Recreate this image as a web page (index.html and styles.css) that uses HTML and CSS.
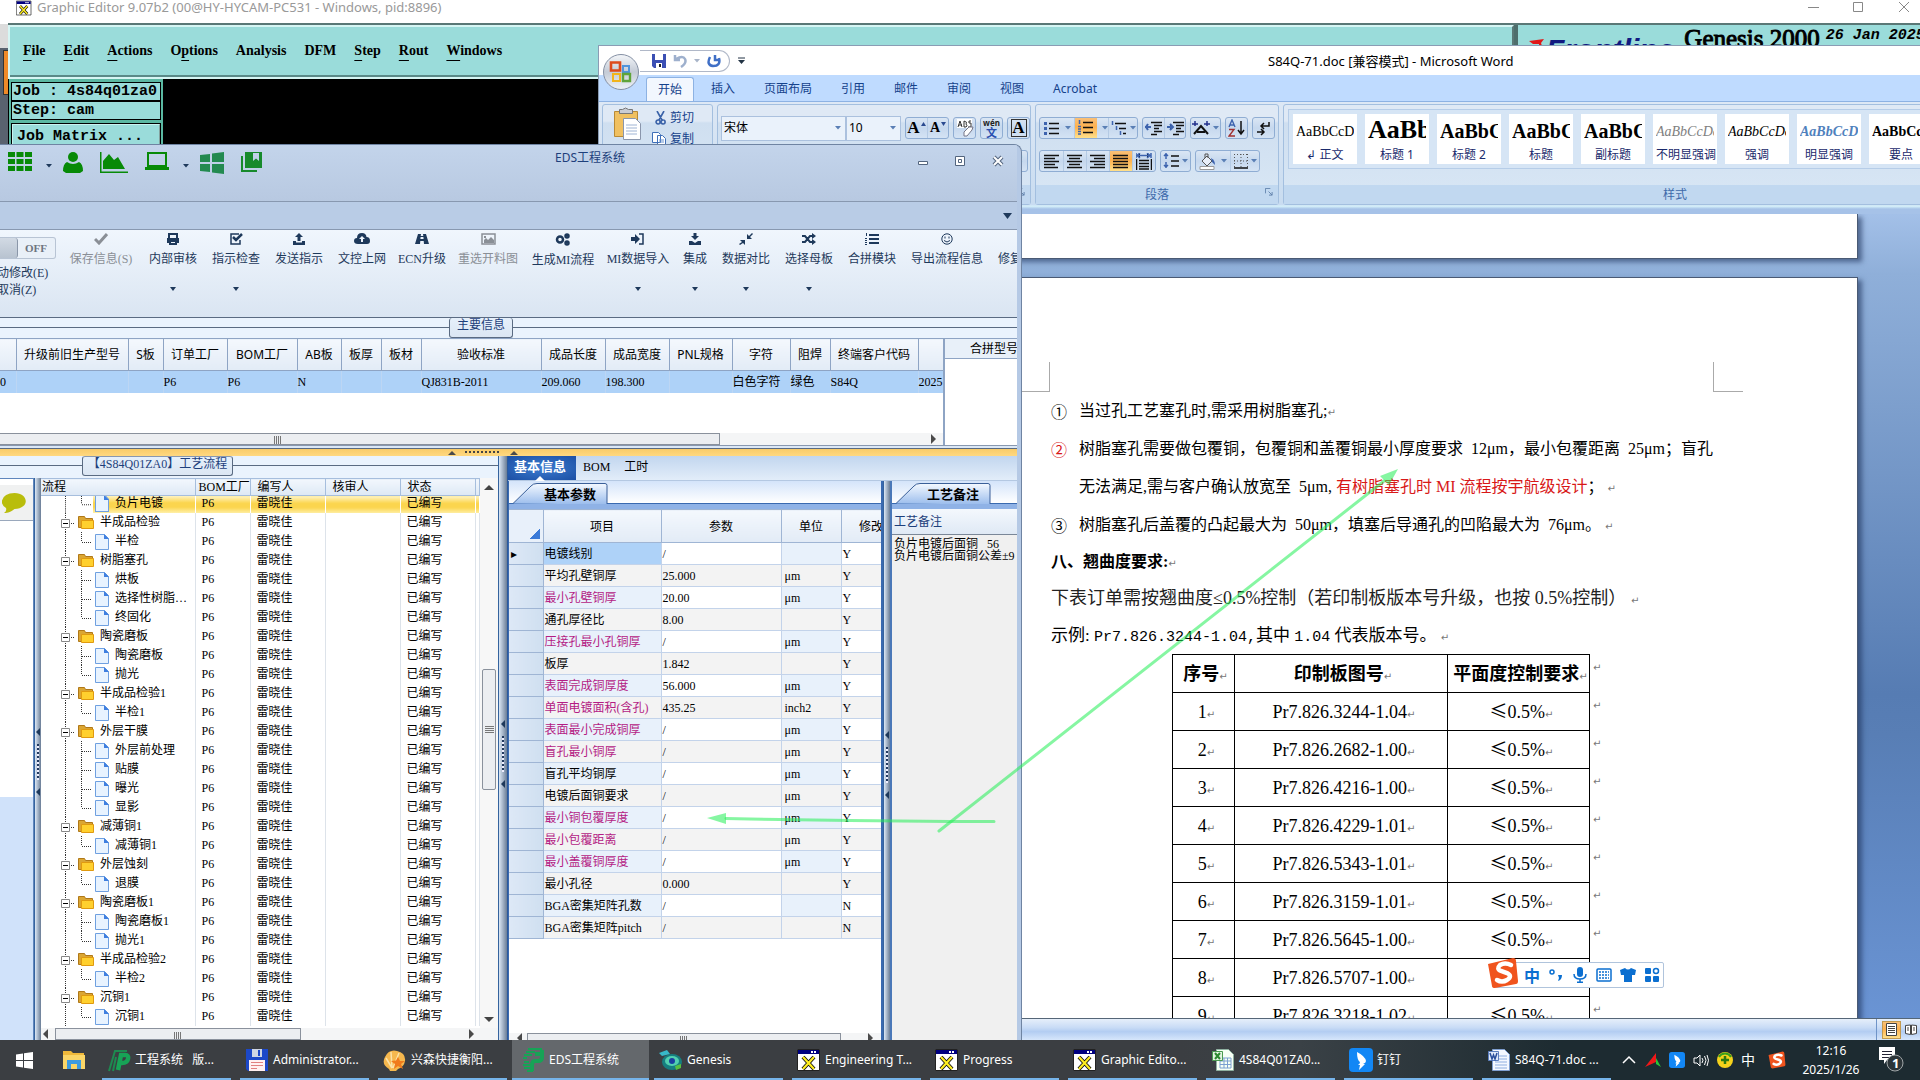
FILE: index.html
```html
<!DOCTYPE html>
<html lang="zh-CN">
<head>
<meta charset="utf-8">
<title>EDS工程系统</title>
<link rel="stylesheet" href="styles.css">
</head>
<body>
<svg class="defs" aria-hidden="true">
  <defs>
    <linearGradient id="orb" x1="0" y1="0" x2="0" y2="1"><stop offset="0" stop-color="#f4f6f9"/><stop offset=".5" stop-color="#c4cbd6"/><stop offset="1" stop-color="#eef2f8"/></linearGradient>
  </defs>
  <symbol id="x-app" viewBox="0 0 24 24"><path fill="#fff" stroke="#222" d="M.5 1.500h22v21H.5z"/><path fill="#000080" d="M1 2h21v4H1z"/><path fill="#fff" d="M14 3h2v2h-2zM17 3h2v2h-2z"/><path stroke="#111" stroke-width="4" d="m6 9 11 12M17 9 6 21"/><path stroke="#ffee20" stroke-width="2.200" d="m6 9 11 12M17 9 6 21"/></symbol>
  <symbol id="p-logo" viewBox="0 0 24 24"><path fill="none" stroke="#17a356" stroke-width="2" d="M7 1h14M5 4h9M3 7h8M6 10H2M8 14H3M10 17H2M10 20H3M6 23h6"/><path fill="none" stroke="#17a356" stroke-width="4" d="M21 2v7q0 4-4 4h-3q-3 0-3 4v6M14 6h6"/></symbol>
  <symbol id="p-app" viewBox="0 0 24 24"><path fill="none" stroke="#1d8a50" stroke-width="2" d="M2 23 8 3h12M6 23 9 9"/><path fill="none" stroke="#17a356" stroke-width="4.500" d="M11 22 14 7h4q4 0 3 4t-6 4h-3"/></symbol>
  <symbol id="word-doc" viewBox="0 0 24 24"><path fill="#f4f8ff" stroke="#7f9fd0" d="M5.500 1.500h12l5 5v16h-17z"/><path stroke="#8eaee0" d="M8 11h12M8 14h12M8 17h12M8 20h12M12 8h8"/><path fill="#dfe9fa" stroke="#5c7fc0" d="M1.500 3.500h10v9h-10z"/><path fill="none" stroke="#2a4f9c" stroke-width="1.500" d="m3 5 2 6 1.500-4L8 11l2-6"/></symbol>
  <symbol id="excel-doc" viewBox="0 0 24 24"><path fill="#f6fff4" stroke="#8fb0a0" d="M5.500 1.500h12l5 5v16h-17z"/><path fill="none" stroke="#7a9fd0" d="M9 10h11v10H9zM9 13h11M9 16.500h11M13 10v10M16.500 10v10"/><path fill="#e2f4e0" stroke="#4a9a50" d="M1.500 3.500h10v9h-10z"/><path fill="none" stroke="#2c8a30" stroke-width="2" d="m4 5 5 6M9 5l-5 6"/></symbol>
  <symbol id="wing" viewBox="0 0 24 24"><rect width="24" height="24" rx="4" fill="#1287f5"/><path fill="#fff" d="M8 4q8 4 9 9 0 2-3 3h2l-6 6 1-5H9q2-1 2-3-3-2-3-10z"/></symbol>
  <symbol id="sogou" viewBox="0 0 32 32"><path fill="#f0541e" d="m1 7 25-6q3 0 3 3l2 20q0 3-2 3L8 31q-3 0-3-2z"/><path fill="none" stroke="#fff" stroke-width="4.500" stroke-linecap="round" d="M24 8q-6-3-11 0-4 4 1 6l6 2q6 3 0 7-5 3-10 0"/></symbol>
  <symbol id="caret" viewBox="0 0 6 4"><path d="M0 0h6L3 3.500z"/></symbol>
</svg>

<section class="genesis">
  <div class="behind"><i></i></div>
  <div class="gwin">
    <header class="gtitle">
      <svg class="i16"><use href="#x-app"/></svg>
      <span>Graphic Editor 9.07b2 (00@HY-HYCAM-PC531 - Windows, pid:8896)</span>
      <svg class="gctl" viewBox="0 0 102 14"><path fill="none" stroke="#888" d="M0 7.500h11M45.500 2.500h9v9h-9zM91 2l10 10M101 2 91 12"/></svg>
    </header>
    <div class="gbar">
      <nav class="gmenu"><a href="#"><u>F</u>ile</a><a href="#"><u>E</u>dit</a><a href="#"><u>A</u>ctions</a><a href="#">O<u>p</u>tions</a><a href="#">Analysis</a><a href="#">DFM</a><a href="#"><u>S</u>tep</a><a href="#"><u>R</u>out</a><a href="#"><u>W</u>indows</a></nav>
      <div class="gbrand"><svg width="18" height="14"><path fill="#e01818" d="M1 3 16 1l-3 4 2 6-4 3V6H5z"/></svg><b>Frontline</b><span>Genesis 2000</span><em>26 Jan 2025</em></div>
    </div>
    <div class="gcanvas">
      <div class="gjob"><div>Job : 4s84q01za0</div><div>Step: cam</div><button>Job Matrix ...</button></div>
    </div>
  </div>
</section>

<section class="word">
  <header class="wtitle">
    <svg class="orb" viewBox="0 0 38 38"><circle cx="19" cy="19" r="17.500" fill="url(#orb)" stroke="#8590a4"/><g fill="none" stroke-width="2.600"><path stroke="#dd4a1c" d="M9 9.500h9v8H9z"/><path stroke="#4f94dc" stroke-width="2" d="M21 13h6v6h-6z"/><path stroke="#f2b41c" stroke-width="2" d="M11 21h7v7h-7z"/><path stroke="#5fa43a" stroke-width="2.400" d="M21 21h7v7h-7z"/></g></svg>
    <div class="qat">
      <svg width="14" height="14"><path fill="#3b4fb4" d="M0 0h14v14H2l-2-2z"/><path fill="#fff" d="M3 0h8v6H3zM4 9h6v5H4z"/><path fill="#222" d="M7 10h2v3H7z"/></svg>
      <svg width="14" height="14"><path fill="none" stroke="#9eb0cd" stroke-width="2.500" d="M2 1v5h5M3 5q7-4 9 0t-4 8"/></svg>
      <svg class="dn pale"><use href="#caret"/></svg>
      <svg width="14" height="14"><path fill="none" stroke="#3f6fc6" stroke-width="2.500" d="M3 3q-4 8 3 9 8 0 6-8M8 1v5h5"/></svg>
    </div>
    <svg width="8" height="8"><path stroke="#234" d="M0 1h7"/><path fill="#234" d="M0 3h7L3.500 7z"/></svg>
    <h1>S84Q-71.doc [兼容模式] - Microsoft Word</h1>
  </header>
  <nav class="wtabs"><a class="on" href="#">开始</a><a href="#">插入</a><a href="#">页面布局</a><a href="#">引用</a><a href="#">邮件</a><a href="#">审阅</a><a href="#">视图</a><a href="#">Acrobat</a></nav>
  <div class="ribbon">
    <div class="grp clip">
      <svg width="30" height="34"><path fill="#f0c060" stroke="#b98a35" d="M1.500 4.500h23v25h-23z"/><path fill="#c9ccd4" stroke="#777" d="M6.500 6.500v-4h3q3-3 6 0h4v4z"/><path fill="#fff" stroke="#8a96ac" d="M10.500 11.500h12l5 5v16h-17z"/><path stroke="#9fb4d4" d="M13 18h11M13 21h11M13 24h11M13 27h11"/></svg>
      <div>
        <button><svg width="11" height="14"><path fill="none" stroke="#3a62a8" stroke-width="1.600" d="M2 0l5 9M9 0 4 9M3 9a2 2 0 1 0 .1 4 2 2 0 0 0 0-4M8 9a2 2 0 1 0 .1 4 2 2 0 0 0 0-4"/></svg>剪切</button>
        <button><svg width="14" height="14"><path fill="#fff" stroke="#3f6fb8" d="M.5.500h6l2 2v8h-8zM5.500 3.500h5l3 3v7h-8z"/><path stroke="#6a94d0" d="M7 8h5M7 10h5"/></svg>复制</button>
      </div>
    </div>
    <div class="grp font">
      <div class="row"><label class="combo wide"><input value="宋体" aria-label="字体"><svg class="dn"><use href="#caret"/></svg></label><label class="combo"><input value="10" aria-label="字号"><svg class="dn"><use href="#caret"/></svg></label>
        <span class="bt ser"><button>A<svg width="5" height="12"><path fill="#2a4a90" d="M0 4 2.500 0 5 4z"/></svg></button><button class="sm">A<svg width="5" height="12"><path fill="#2a4a90" d="M0 0h5L2.500 4z"/></svg></button></span>
        <span class="bt"><button aria-label="清除格式"><svg width="18" height="18"><path fill="#fff" d="M1 0h15v9H1z"/><path fill="none" stroke="#333" d="m2 8 2-6 2 6M3 6h3M8 2v6h2q2-1 0-3 2-2-2-3M15 2h-2v2h2v4h-3"/><path fill="#fff" stroke="#778" d="m8 13 5-5h4l-1 3-5 6H8z"/></svg></button></span>
        <span class="bt wen"><button><small>wén</small>文</button></span>
        <span class="bt ser"><button class="boxed"><b>A</b></button></span></div>
      <div class="row"><span class="bt circ"><button>字</button></span></div>
      <footer><svg class="lau" viewBox="0 0 9 9"><path fill="none" stroke="#5d7ea8" d="M.5 6V.500H6M4 4l4 4M8 4.500V8H4.500"/></svg></footer>
    </div>
    <div class="grp para">
      <div class="row">
        <span class="bt"><button class="w34"><svg width="16" height="15"><path fill="#3d63ae" d="M0 1h3v3H0zM0 6h3v3H0zM0 11h3v3H0z"/><path stroke="#111" stroke-width="1.500" d="M5 2.500h10M5 7.500h10M5 12.500h10"/></svg><svg class="dn"><use href="#caret"/></svg></button><button class="w34"><svg class="lit" width="22" height="20" viewBox="-3 -2 22 20"><path stroke="#3d63ae" stroke-width="1.500" d="M1.500 0v4M0 6.500h3M0 9h3M0 11.500h3M0 14h3"/><path stroke="#111" stroke-width="1.500" d="M5 2.500h10M5 7.500h10M5 12.500h10"/></svg><svg class="dn"><use href="#caret"/></svg></button><button class="w30"><svg width="16" height="15"><path stroke="#3d63ae" stroke-width="1.500" d="M1.500 0v4M5.500 5v4M9.500 10v4"/><path stroke="#111" stroke-width="1.500" d="M4 2.500h11M8 7.500h7M12 12.500h3"/></svg><svg class="dn"><use href="#caret"/></svg></button></span>
        <span class="bt"><button><svg width="17" height="15"><path stroke="#111" stroke-width="1.500" d="M6 1.500h11M9 4.500h8M9 7.500h5M9 10.500h8M6 13.500h6"/><path stroke="#3d63ae" stroke-width="2" d="M0 6h6M3 3 1 6l2 3"/></svg></button><button><svg width="17" height="15"><path stroke="#111" stroke-width="1.500" d="M6 1.500h11M9 4.500h8M9 7.500h5M9 10.500h8M6 13.500h6"/><path stroke="#3d63ae" stroke-width="2" d="M0 6h6M3 3l3 3-3 3"/></svg></button></span>
        <span class="bt"><button class="w30"><svg width="18" height="15"><path fill="none" stroke="#111" stroke-width="2" d="m2 13 7-8 7 8M5 11h8"/><path stroke="#22308c" stroke-width="1.500" d="M0 3h6M12 3h6M3 0v5M15 0v5"/></svg><svg class="dn"><use href="#caret"/></svg></button></span>
        <span class="bt"><button><svg width="18" height="18"><path fill="none" stroke="#3d63ae" stroke-width="1.400" d="m1 8 3-7 3 7M2 6h4"/><path fill="none" stroke="#a03030" stroke-width="1.400" d="M1 10.500h5L1 17h6"/><path fill="none" stroke="#111" stroke-width="1.500" d="M13 2v13m-3-4 3 4 3-4"/></svg></button></span>
        <span class="bt"><button><svg width="14" height="15"><path fill="none" stroke="#111" stroke-width="1.500" d="M12 1v4H5m2-3L4 5l3 3M0 11h7M4 8l3 3-3 3"/></svg></button></span>
      </div>
      <div class="row">
        <span class="bt al"><button><svg width="16" height="15"><path stroke="#111" stroke-width="1.500" d="M0 1.500h15M0 4.500h11M0 7.500h15M0 10.500h11M0 13.500h14"/></svg></button><button><svg width="16" height="15"><path stroke="#111" stroke-width="1.500" d="M0 1.500h15M2 4.500h11M0 7.500h15M2 10.500h11M0 13.500h15"/></svg></button><button><svg width="16" height="15"><path stroke="#111" stroke-width="1.500" d="M0 1.500h15M4 4.500h11M0 7.500h15M4 10.500h11M0 13.500h15"/></svg></button><button class="hot"><svg width="16" height="15"><path stroke="#111" stroke-width="1.500" d="M0 1.500h15M0 4.500h15M0 7.500h15M0 10.500h15M0 13.500h15"/></svg></button><button><svg width="16" height="17"><path stroke="#3d63ae" stroke-width="1.500" d="M0 0v5M15 0v5M1 2.500h13M4 0 1 2.500 4 5M11 0l3 2.500L11 5"/><path stroke="#111" stroke-width="1.500" d="M.500 6v11M15.500 6v11M3 7.500h10M3 10.500h10M3 13.500h10M3 16h10"/></svg></button></span>
        <span class="bt"><button class="w30"><svg width="16" height="16"><path fill="none" stroke="#3d63ae" stroke-width="1.500" d="M3 0v6M1 3l2-2 2 2M3 15V9m-2 3 2 2 2-2"/><path stroke="#111" stroke-width="1.500" d="M8 3h8M8 8h8M8 13h8"/></svg><svg class="dn"><use href="#caret"/></svg></button></span>
        <span class="bt"><button class="w34"><svg width="17" height="17"><path fill="#e8eef8" stroke="#555" d="m3 8 5-5 5 5-5 5z"/><path fill="none" stroke="#555" d="M6 5V1h3v4"/><path fill="#3d63ae" d="M12 5q4 2 4 7l-3-3z"/><path fill="#fff" stroke="#999" d="M1 13.500h14v3H1z"/></svg><svg class="dn"><use href="#caret"/></svg></button><button class="w30"><svg width="14" height="15"><path stroke="#555" stroke-dasharray="1 2" d="M.500 0v14M7 0v14M13.500 0v14M0 .500h14M0 7h14"/><path stroke="#111" stroke-width="1.500" d="M0 14h14"/></svg><svg class="dn"><use href="#caret"/></svg></button></span>
      </div>
      <footer>段落<svg class="lau" viewBox="0 0 9 9"><path fill="none" stroke="#5d7ea8" d="M.5 6V.500H6M4 4l4 4M8 4.500V8H4.500"/></svg></footer>
    </div>
    <div class="grp styles">
      <div class="gallery">
        <button><span>AaBbCcDd</span>↲ 正文</button><button class="h1"><span>AaBb</span>标题 1</button><button class="h2"><span>AaBbC</span>标题 2</button><button class="h2"><span>AaBbC</span>标题</button><button class="h2"><span>AaBbC</span>副标题</button><button class="dim"><span>AaBbCcDd</span>不明显强调</button><button class="it"><span>AaBbCcDd</span>强调</button><button class="blu"><span>AaBbCcDd</span>明显强调</button><button class="bd"><span>AaBbCcDd</span>要点</button>
      </div>
      <footer>样式</footer>
    </div>
  </div>
  <main class="desk">
    <div class="page first"></div>
    <article class="page">
      <div class="corners"><i></i><i></i></div>
      <ol>
        <li><span>①</span><p>当过孔工艺塞孔时,需采用树脂塞孔;<s>↵</s></p></li>
        <li><span class="red">②</span><p>树脂塞孔需要做包覆铜，包覆铜和盖覆铜最小厚度要求&nbsp; 12μm，最小包覆距离&nbsp; 25μm；盲孔<br>无法满足,需与客户确认放宽至&nbsp; 5μm, <em class="red">有树脂塞孔时 MI 流程按宇航级设计</em>； <s>↵</s></p></li>
        <li><span>③</span><p>树脂塞孔后盖覆的凸起最大为&nbsp; 50μm，填塞后导通孔的凹陷最大为&nbsp; 76μm。 <s>↵</s></p></li>
      </ol>
      <h2>八、翘曲度要求:<s>↵</s></h2>
      <p class="big">下表订单需按翘曲度≤0.5%控制（若印制板版本号升级，也按 0.5%控制） <s>↵</s></p>
      <p class="mid">示例: <span>Pr7.826.3244-1.04,</span>其中 <span>1.04</span> 代表版本号。 <s>↵</s></p>
      <table>
        <colgroup><col class="k1"><col class="k2"><col class="k3"><col class="k4"></colgroup>
        <tr><th>序号<s>↵</s><th>印制板图号<s>↵</s><th>平面度控制要求<s>↵</s><td><s>↵</s>
        <tr><td>1<s>↵</s><td>Pr7.826.3244-1.04<s>↵</s><td><b>≤</b>0.5%<s>↵</s><td><s>↵</s>
        <tr><td>2<s>↵</s><td>Pr7.826.2682-1.00<s>↵</s><td><b>≤</b>0.5%<s>↵</s><td><s>↵</s>
        <tr><td>3<s>↵</s><td>Pr7.826.4216-1.00<s>↵</s><td><b>≤</b>0.5%<s>↵</s><td><s>↵</s>
        <tr><td>4<s>↵</s><td>Pr7.826.4229-1.01<s>↵</s><td><b>≤</b>0.5%<s>↵</s><td><s>↵</s>
        <tr><td>5<s>↵</s><td>Pr7.826.5343-1.01<s>↵</s><td><b>≤</b>0.5%<s>↵</s><td><s>↵</s>
        <tr><td>6<s>↵</s><td>Pr7.826.3159-1.01<s>↵</s><td><b>≤</b>0.5%<s>↵</s><td><s>↵</s>
        <tr><td>7<s>↵</s><td>Pr7.826.5645-1.00<s>↵</s><td><b>≤</b>0.5%<s>↵</s><td><s>↵</s>
        <tr><td>8<s>↵</s><td>Pr7.826.5707-1.00<s>↵</s><td><td>
        <tr><td>9<s>↵</s><td>Pr7.826.3218-1.02<s>↵</s><td><b>≤</b>0.5%<s>↵</s><td><s>↵</s>
      </table>
    </article>
  </main>
  <footer class="wstatus"><div><button class="hot" aria-label="页面视图"><svg width="11" height="13"><path fill="#fff" stroke="#444" d="M.5.500h10v12H.5z"/><path stroke="#444" d="M2 3.500h7M2 5.500h7M2 7.500h7M2 9.500h7"/></svg></button><svg width="12" height="12"><path fill="#fff" stroke="#444" d="M.5 1.500 5.500 1v9.500l-5-1zM11.500 1.500 6.500 1v9.500l5-1z"/><path stroke="#444" d="M2 4h2M2 6h2M8 4h2M8 6h2"/></svg></div></footer>
</section>

<section class="eds">
  <header class="etop">
    <svg width="24" height="20" fill="#078a07"><path d="M0 0h7v5H0zM8.500 0h7v5h-7zM17 0h7v5h-7zM0 7h7v5H0zM8.500 7h7v5h-7zM17 7h7v5h-7zM0 14h7v5H0zM8.500 14h7v5h-7zM17 14h7v5h-7z"/></svg>
    <svg class="dn dk"><use href="#caret"/></svg>
    <svg width="20" height="21" fill="#078a07"><circle cx="10" cy="5" r="5"/><path d="M4 10q6 4 12 0 4 2 4 9l-3 2H3l-3-2q0-7 4-9z"/></svg>
    <svg width="28" height="21" fill="#078a07"><path d="M0 0h1.500v19.500H28V21H0zM3 17v-8l6-7 5 6 4-3 7 12z"/></svg>
    <svg width="24" height="18" fill="none" stroke="#078a07" stroke-width="2"><path d="M3 1h18v13H3z"/><path stroke-width="3" d="M0 16.500h24"/></svg>
    <svg class="dn dk"><use href="#caret"/></svg>
    <svg width="24" height="22" fill="#238a50"><path d="M0 3 10 2v8H0zM12 1.500 24 0v10H12zM0 12h10v8L0 19zM12 12h12v10l-12-1.500z"/></svg>
    <svg width="21" height="20" fill="#178a2c"><path d="M0 4h2v14h14v2H0zM4 0h17v16H4zM12 1v8l3-2.500L18 9V1z" fill-rule="evenodd"/></svg>
    <h1>EDS工程系统</h1>
    <svg class="ectl" viewBox="0 0 88 14"><g fill="#fff" stroke="#53657e"><path d="M1.500 7.500h9v3h-9zM38.500 2.500h9v9h-9zM41.500 5.500h3v3h-3z"/><path fill="none" stroke-width="4" d="m77 3 8 8M85 3l-8 8"/><path fill="none" stroke="#fff" stroke-width="2" d="m77 3 8 8M85 3l-8 8"/></g></svg>
  </header>
  <div class="eband"><svg width="9" height="6"><path fill="#1e395b" d="M0 0h9L4.500 6z"/></svg></div>
  <div class="etools">
    <div class="sw"><label class="off"><input type="checkbox"><i></i>OFF</label><button>动修改(E)</button><button>取消(Z)</button></div>
    <button class="dis"><svg width="14" height="12"><path fill="none" stroke="currentColor" stroke-width="3" d="m1 6 4 4 8-9"/></svg>保存信息(S)</button>
    <button class="m"><svg width="14" height="12"><path fill="none" stroke="currentColor" stroke-width="2" d="M3 5V1h8v4M2 10V6h10v4M4 8h6v3H4z"/></svg>内部审核</button>
    <button class="m"><svg width="14" height="12"><path fill="none" stroke="currentColor" stroke-width="1.500" d="M11 7v4H2V1h8"/><path fill="none" stroke="currentColor" stroke-width="2.500" d="m4 4 3 3 6-6"/></svg>指示检查</button>
    <button><svg width="14" height="12"><path fill="currentColor" d="M7 0l4 4H8.500v4h-3V4H3zM1 8h3v1.500h6V8h3v4H1z"/></svg>发送指示</button>
    <button><svg width="16" height="12"><path fill="currentColor" fill-rule="evenodd" d="M4 11Q0 11 0 8q0-3 3-3 0-5 5-5 4 0 4.500 4Q16 4 16 8q0 3-3 3zM8 3 5 6h2v3h2V6h2z"/></svg>文控上网</button>
    <button><svg width="14" height="12"><path fill="currentColor" fill-rule="evenodd" d="M3 1h3l-.3 2h2.600L8 1h3l3 10H9l-.3-3H5.300L5 11H0zM5.600 4l-.2 2h3.200l-.2-2z"/></svg>ECN升级</button>
    <button class="dis"><svg width="15" height="12"><path fill="none" stroke="currentColor" stroke-width="1.500" d="M1 1h13v10H1z"/><path fill="currentColor" d="M3 10V7l2-2 2 2 3-3 3 3v3zM3 3h2v2H3z"/></svg>重选开料图</button>
    <button><svg width="16" height="13"><g fill="none" stroke="currentColor" stroke-width="2.500"><circle cx="5" cy="6.500" r="3"/><circle cx="12" cy="3" r="1.500"/><circle cx="12" cy="10" r="1.500"/></g></svg>生成MI流程</button>
    <button class="m"><svg width="14" height="12"><path fill="currentColor" d="M0 4h4V1l5 5-5 5V8H0z"/><path fill="none" stroke="currentColor" stroke-width="1.500" d="M8 1h4v10H8"/></svg>MI数据导入</button>
    <button class="m"><svg width="14" height="12"><path fill="currentColor" d="M5.500 0h3v3H11L7 7 3 3h2.500zM1 8h3l3 2 3-2h3v4H1z"/></svg>集成</button>
    <button class="m"><svg width="14" height="12"><path fill="currentColor" d="M8 1v5h5l-2-2 3-3-1-1-3 3zM1 7h5v5l-2-2-3 2-1-1 3-2z"/></svg>数据对比</button>
    <button class="m"><svg width="14" height="12"><path fill="none" stroke="currentColor" stroke-width="2" d="M0 3h3l5 6h3M0 9h3l5-6h3"/><path fill="currentColor" d="M10 0l4 3-4 3zM10 6l4 3-4 3z"/></svg>选择母板</button>
    <button><svg width="14" height="12"><path stroke="currentColor" stroke-width="2" d="M4 2h10M4 6h10M4 10h10"/><path stroke="currentColor" d="M1.500 0v3M0 5.500h2M0 7.500h2M0 9.500h2M0 11.500h2"/></svg>合拼模块</button>
    <button><svg width="14" height="12"><circle cx="7" cy="6" r="5.200" fill="none" stroke="currentColor"/><path fill="none" stroke="currentColor" d="M5 3.500v2M9 3.500v2M4 7.500q3 3 6 0"/></svg>导出流程信息</button>
    <button><svg width="14" height="12"></svg>修复</button>
  </div>
  <div class="cap main"><span>主要信息</span></div>
  <div class="jobs">
    <div class="jgrid">
      <table>
        <colgroup><col class="c16"><col class="c112"><col class="c35"><col class="c64"><col class="c70"><col class="c44"><col class="c40"><col class="c40"><col class="c120"><col class="c64"><col class="c64"><col class="c63"><col class="c58"><col class="c40"><col class="c88"><col class="c40"></colgroup>
        <tr><th><th>升级前旧生产型号<th>S板<th>订单工厂<th>BOM工厂<th>AB板<th>板厚<th>板材<th>验收标准<th>成品长度<th>成品宽度<th>PNL规格<th>字符<th>阻焊<th>终端客户代码<th>
        <tr><td>0<td><td><td>P6<td>P6<td>N<td><td><td>QJ831B-2011<td>209.060<td>198.300<td><td>白色字符<td>绿色<td>S84Q<td>2025
      </table>
      <div class="hs"><i></i><b class="r"></b></div>
    </div>
    <div class="jside"><div>合拼型号</div></div>
  </div>
  <div class="split"><b></b><i></i><b></b></div>
  <div class="lower">
    <div class="flow">
      <div class="cap proc"><span>【4S84Q01ZA0】工艺流程</span></div>
      <div class="frow">
        <div class="note"><div><svg width="25" height="21"><path fill="#b9bd0c" d="M12.500 0C26 0 29 15 12.500 16 8 20 4 20 2 20q3-2 2-5Q-1 12 0 7.500 2 0 12.500 0z"/></svg></div></div>
        <div class="vs"><b></b><i></i><b></b></div>
        <div class="tree">
          <div class="tgrid">
          <table>
            <colgroup><col class="t1"><col class="t2"><col class="t3"><col class="t3"><col class="t3"><col></colgroup>
            <thead><tr><th>流程<th>BOM工厂<th>编写人<th>核审人<th>状态<th></thead>
            <tbody>
            <tr class="l e sel"><td>负片电镀<td>P6<td>雷晓佳<td><td>已编写<td>
            <tr><td>半成品检验<td>P6<td>雷晓佳<td><td>已编写<td>
            <tr class="l e"><td>半检<td>P6<td>雷晓佳<td><td>已编写<td>
            <tr><td>树脂塞孔<td>P6<td>雷晓佳<td><td>已编写<td>
            <tr class="l"><td>烘板<td>P6<td>雷晓佳<td><td>已编写<td>
            <tr class="l"><td>选择性树脂…<td>P6<td>雷晓佳<td><td>已编写<td>
            <tr class="l e"><td>终固化<td>P6<td>雷晓佳<td><td>已编写<td>
            <tr><td>陶瓷磨板<td>P6<td>雷晓佳<td><td>已编写<td>
            <tr class="l"><td>陶瓷磨板<td>P6<td>雷晓佳<td><td>已编写<td>
            <tr class="l e"><td>抛光<td>P6<td>雷晓佳<td><td>已编写<td>
            <tr><td>半成品检验1<td>P6<td>雷晓佳<td><td>已编写<td>
            <tr class="l e"><td>半检1<td>P6<td>雷晓佳<td><td>已编写<td>
            <tr><td>外层干膜<td>P6<td>雷晓佳<td><td>已编写<td>
            <tr class="l"><td>外层前处理<td>P6<td>雷晓佳<td><td>已编写<td>
            <tr class="l"><td>贴膜<td>P6<td>雷晓佳<td><td>已编写<td>
            <tr class="l"><td>曝光<td>P6<td>雷晓佳<td><td>已编写<td>
            <tr class="l e"><td>显影<td>P6<td>雷晓佳<td><td>已编写<td>
            <tr><td>减薄铜1<td>P6<td>雷晓佳<td><td>已编写<td>
            <tr class="l e"><td>减薄铜1<td>P6<td>雷晓佳<td><td>已编写<td>
            <tr><td>外层蚀刻<td>P6<td>雷晓佳<td><td>已编写<td>
            <tr class="l e"><td>退膜<td>P6<td>雷晓佳<td><td>已编写<td>
            <tr><td>陶瓷磨板1<td>P6<td>雷晓佳<td><td>已编写<td>
            <tr class="l"><td>陶瓷磨板1<td>P6<td>雷晓佳<td><td>已编写<td>
            <tr class="l e"><td>抛光1<td>P6<td>雷晓佳<td><td>已编写<td>
            <tr><td>半成品检验2<td>P6<td>雷晓佳<td><td>已编写<td>
            <tr class="l e"><td>半检2<td>P6<td>雷晓佳<td><td>已编写<td>
            <tr><td>沉铜1<td>P6<td>雷晓佳<td><td>已编写<td>
            <tr class="l e"><td>沉铜1<td>P6<td>雷晓佳<td><td>已编写<td>
            </tbody>
          </table>
          <div class="vbar"><b class="u"></b><i></i><b class="d"></b></div>
          </div>
          <div class="hs tree-hs"><b class="lft"></b><i></i><b class="r"></b></div>
        </div>
      </div>
    </div>
    <div class="vs wide"><b></b><i></i><b></b></div>
    <div class="detail">
      <nav class="dtabs"><button class="on">基本信息</button><button>BOM</button><button>工时</button></nav>
      <div class="drow">
        <div class="params">
          <div class="sub"><button>基本参数</button></div>
          <table>
            <colgroup><col class="p0"><col class="p1"><col class="p2"><col class="p3"><col class="p3"></colgroup>
            <thead><tr><th class="all"><th>项目<th>参数<th>单位<th>修改</thead>
            <tbody>
            <tr class="cur"><td>▸<td>电镀线别<td>/<td><td>Y
            <tr><td><td>平均孔壁铜厚<td>25.000<td>μm<td>Y
            <tr class="k"><td><td>最小孔壁铜厚<td>20.00<td>μm<td>Y
            <tr><td><td>通孔厚径比<td>8.00<td><td>Y
            <tr class="k"><td><td>压接孔最小孔铜厚<td>/<td>μm<td>Y
            <tr><td><td>板厚<td>1.842<td><td>Y
            <tr class="k"><td><td>表面完成铜厚度<td>56.000<td>μm<td>Y
            <tr class="k"><td><td>单面电镀面积(含孔)<td>435.25<td>inch2<td>Y
            <tr class="k"><td><td>表面最小完成铜厚<td>/<td>μm<td>Y
            <tr class="k"><td><td>盲孔最小铜厚<td>/<td>μm<td>Y
            <tr><td><td>盲孔平均铜厚<td>/<td>μm<td>Y
            <tr><td><td>电镀后面铜要求<td>/<td>μm<td>Y
            <tr class="k"><td><td>最小铜包覆厚度<td>/<td>μm<td>Y
            <tr class="k"><td><td>最小包覆距离<td>/<td>μm<td>Y
            <tr class="k"><td><td>最小盖覆铜厚度<td>/<td>μm<td>Y
            <tr><td><td>最小孔径<td>0.000<td><td>Y
            <tr><td><td>BGA密集矩阵孔数<td>/<td><td>N
            <tr><td><td>BGA密集矩阵pitch<td>/<td><td>N
            </tbody>
          </table>
          <div class="hs par-hs"><b class="lft"></b><i></i><b class="r"></b></div>
        </div>
        <div class="vs mid"><b></b><i></i><b></b></div>
        <div class="memo">
          <div class="sub"><button>工艺备注</button></div>
          <h3>工艺备注</h3>
          <p>负片电镀后面铜&nbsp;&nbsp; 56<br>负片电镀后面铜公差±9</p>
        </div>
      </div>
    </div>
  </div>
</section>

<svg class="ink" aria-hidden="true"><g fill="none" stroke="#22ee55" stroke-opacity=".55" stroke-width="3" stroke-linecap="round"><path d="M939 831 1384 481"/><path d="M994 821.500H950L850 820.500 750 819 726 818.500"/></g><path fill="#22ee55" fill-opacity=".55" d="m1398 469-18 7 9 9zM707 818l19-5v11z"/></svg>

<div class="ime">
  <svg width="32" height="32"><use href="#sogou"/></svg><span>中</span>
  <svg viewBox="0 0 16 16"><circle cx="4" cy="5" r="2" fill="none" stroke="#0b6fd0" stroke-width="1.500"/><path fill="#0b6fd0" d="M10 8h4q0 5-4 6l1-3z"/></svg>
  <svg viewBox="0 0 16 16"><rect x="5" width="6" height="10" rx="3" fill="#0b6fd0"/><path fill="none" stroke="#0b6fd0" stroke-width="1.500" d="M2 7q0 5 6 5t6-5M8 12v3M5 15.300h6"/></svg>
  <svg viewBox="0 0 16 16"><rect x="1" y="2" width="14" height="12" rx="1" fill="none" stroke="#0b6fd0" stroke-width="1.500"/><path stroke="#0b6fd0" stroke-width="1.500" stroke-dasharray="2 1" d="M3 5h10M3 8h10M3 11h10"/></svg>
  <svg viewBox="0 0 16 16"><path fill="#0b6fd0" d="M0 3l5-2q3 3 6 0l5 2-1 5h-3v7H4V8H1z"/></svg>
  <svg viewBox="0 0 16 16" fill="#0b6fd0"><rect x="1" y="1" width="6" height="6" rx="1"/><circle cx="12" cy="4" r="2.500" fill="none" stroke="#0b6fd0" stroke-width="1.500"/><rect x="1" y="9" width="6" height="6" rx="1"/><rect x="9" y="9" width="6" height="6" rx="1"/></svg>
</div>

<footer class="taskbar">
  <button class="start" aria-label="开始"><svg width="17" height="17" fill="#fff"><path d="M0 2.500 7 1.500V8H0zM8 1.300 17 0v8H8zM0 9h7v6.500L0 14.500zM8 9h9v8l-9-1.300z"/></svg></button>
  <button class="exp" aria-label="文件资源管理器"><svg width="22" height="20"><path fill="#f0b93a" d="M0 1h8l2 2h11v4H0z"/><path fill="#fbd667" d="M0 5h22v14H0z"/><path fill="#3d9be0" d="M4 10h14v9h-4v-5H8v5H4z"/></svg></button>
  <button class="t"><svg width="24" height="24"><use href="#p-app"/></svg>工程系统&nbsp;&nbsp; 版...</button>
  <button class="t"><svg width="24" height="24" viewBox="0 0 24 24"><path fill="#1c48c8" d="M1 1h22v22H3l-2-2z"/><path fill="#cfd6e4" d="M7 1h10v8H7z"/><path fill="#1c48c8" d="M13 2h2v6h-2z"/><path fill="#fff0f0" d="M4 12h16v11H4z"/><path stroke="#e08080" d="M6 14.500h12M6 17.500h12M6 20.500h6"/></svg>Administrator...</button>
  <button class="t"><svg width="24" height="24" viewBox="0 0 24 24"><path fill="#f6b84e" d="M6 21Q-2 16 2 9q4-8 12-6 9 2 8 10-1 6-7 8l-2 2H7z"/><path stroke="#fce2a8" stroke-width="1.500" d="M9 20 3 10M9 20 8 4M10 20l6-15"/><path fill="#f07a1c" d="m15 9 2 4h5l-4 3 2 5-5-3-4 3 1-5-4-3 5-.5z"/></svg>兴森快捷衡阳...</button>
  <button class="t on"><svg width="24" height="24"><use href="#p-logo"/></svg>EDS工程系统</button>
  <button class="t"><svg width="24" height="24" viewBox="0 0 24 24"><ellipse cx="13" cy="14" rx="10" ry="8" fill="#167e80"/><ellipse cx="13" cy="13" rx="7" ry="5" fill="#52d0b0"/><circle cx="13" cy="13" r="3" fill="#1a3fa0"/><path fill="#38b8c8" d="M0 5 8 2l3 4-8 2z"/><path fill="#58c040" d="M16 18l6-2v4l-5 2z"/></svg>Genesis</button>
  <button class="t"><svg width="24" height="24"><use href="#x-app"/></svg>Engineering T...</button>
  <button class="t"><svg width="24" height="24"><use href="#x-app"/></svg>Progress</button>
  <button class="t"><svg width="24" height="24"><use href="#x-app"/></svg>Graphic Edito...</button>
  <button class="t"><svg width="24" height="24"><use href="#excel-doc"/></svg>4S84Q01ZA0...</button>
  <button class="t"><svg width="24" height="24"><use href="#wing"/></svg>钉钉</button>
  <button class="t"><svg width="24" height="24"><use href="#word-doc"/></svg>S84Q-71.doc ...</button>
  <div class="tray">
    <svg width="16" height="16"><path fill="none" stroke="#fff" stroke-width="1.500" d="m2 11 6-6 6 6"/></svg>
    <svg width="16" height="16"><path fill="#f01818" d="M11 1v9L0 15z"/><path fill="#28c838" d="m11 6 5 9-5-3z"/></svg>
    <svg width="16" height="16"><use href="#wing"/></svg>
    <svg width="16" height="16"><path fill="none" stroke="#fff" d="M1 6h3l3-3v11l-3-3H1zM9 6q2 2 0 5M11.500 4q3 4 0 9M14 3q3 5 0 11"/></svg>
    <svg width="16" height="16"><circle cx="8" cy="8" r="8" fill="#f5d21c"/><path fill="none" stroke="#3aa01c" stroke-width="2" d="M2 5a7 7 0 0 1 12 0"/><path stroke="#2c7a10" stroke-width="2.500" d="M8 4v8M4 8h8"/></svg>
    <span class="zh">中</span>
    <svg class="sg"><use href="#sogou"/></svg>
    <time>12:16<br>2025/1/26</time>
    <svg width="26" height="26"><path fill="#fff" d="M0 0h16v13H8l-3 4v-4H0z"/><path stroke="#223" d="M3 4.500h10M3 7.500h10M3 10.500h7"/><circle cx="16" cy="16" r="8" fill="#2b3438" stroke="#a0a6a8"/><text x="13" y="21" fill="#fff" font-size="13" font-weight="bold">1</text></svg>
  </div>
</footer>
</body>
</html>
```

FILE: styles.css
```css
* { box-sizing: border-box; }
body { margin: 0; height: 100vh; overflow: hidden; position: relative; background: #000; font: 12px/16px "Noto Sans", "Noto Sans CJK SC", sans-serif; color: #000; }
button { font: inherit; color: inherit; background: none; border: 0; padding: 0; margin: 0; white-space: nowrap; }
a { color: inherit; text-decoration: none; }
svg { flex: none; display: block; }
h1, h2, h3, p, ol { margin: 0; padding: 0; font: inherit; }
table { border-collapse: collapse; table-layout: fixed; }
th { font-weight: normal; }
.defs { position: absolute; width: 0; height: 0; }
.dn { width: 6px; height: 4px; fill: #5a7fb5; }
.dn.pale { fill: #a8b4c8; }
.dn.dk { fill: #1e395b; }

/* Genesis graphic editor */
.genesis { position: absolute; inset: 0 0 40px 0; display: flex; }
.behind { width: 8px; background: linear-gradient(#fff 24px, #dcdcdc 24px 48px, #59626f 48px); padding-top: 50px; }
.behind i { display: block; margin-left: 3px; height: 45px; background: #f08a28; border: 1px solid #333; border-width: 1px 0 1px 1px; }
.gwin { flex: 1; display: flex; flex-direction: column; }
.gtitle { height: 23px; background: #fff; display: flex; padding: 0 10px 0 8px; color: #999; font-size: 13px; line-height: 15px; gap: 5px; white-space: nowrap; }
.i16 { width: 16px; height: 16px; }
.gctl { width: 102px; height: 14px; margin-left: auto; }
.gbar { height: 56px; display: flex; border-top: 2px solid #5a7876; }
.gmenu { flex: 1; display: flex; gap: 18px; padding: 0 0 2px 13px; align-items: center; font: bold 14px/18px "Liberation Serif", serif; background: #9adcda; border: 2px solid #d6f6f4; border-right-color: #5a7876; box-shadow: inset 0 -2px #5a8a88; }
.gmenu u { text-underline-offset: 5px; }
.gbrand { width: 406px; display: flex; padding-left: 10px; background: #9adcda; border-left: 4px solid #4e6e6c; white-space: nowrap; overflow: hidden; }
.gbrand svg { margin-top: 13px; }
.gbrand b { color: #101a80; font: italic bold 30px/34px "Liberation Sans", sans-serif; width: 134px; padding-top: 8px; }
.gbrand span { font: 25px/28px "Liberation Serif", serif; -webkit-text-stroke: 1px #000; margin-left: 10px; }
.gbrand em { font: italic bold 15px/18px "Liberation Mono", monospace; margin-left: 6px; padding-top: 2px; }
.gcanvas { flex: 1; background: #000; padding-left: 1px; }
.gjob { width: 154px; height: 100px; background: #5bb8a2; padding: 3px 2px; font: bold 15px/17px "Liberation Mono", monospace; white-space: nowrap; }
.gjob div { border: 1px solid #000; background: #9adcda; padding-left: 1px; height: 19px; }
.gjob button { display: block; width: 150px; height: 30px; margin-top: 3px; background: #9adcda; border: 2px outset #c8f4f0; outline: 1px solid #000; outline-offset: -1px; text-align: left; padding: 0 0 4px 4px; }

/* Word window */
.word { position: absolute; left: 598px; right: 0; top: 45px; bottom: 40px; display: flex; flex-direction: column; background: #fff; border: solid #8a9cb4; border-width: 1px 0 0 1px; overflow: hidden; }
.wtitle { height: 29px; display: flex; align-items: center; background: #fff; flex: none; }
.orb { width: 38px; height: 38px; margin: 22px 0 0 3px; position: relative; z-index: 1; }
.qat { display: flex; align-items: center; gap: 7px; height: 22px; width: 90px; border: 1px solid #b0b8c8; border-left: 0; border-radius: 0 11px 11px 0; padding-left: 12px; margin-right: 8px; }
.wtitle h1 { margin-left: 522px; white-space: nowrap; font-size: 13px; }
.wtabs { height: 27px; flex: none; display: flex; gap: 1px; padding: 2px 0 0 47px; background: #bfdbff; color: #15428b; border-bottom: 1px solid #8db2e3; line-height: 24px; }
.wtabs a { padding: 0 14px; }
.wtabs .on { padding: 0 11px; margin: 0 2px 0 0; background: #f2f7fe; border: 1px solid #8db2e3; border-bottom: 0; border-radius: 3px 3px 0 0; }
.ribbon { height: 112px; flex: none; display: flex; gap: 4px; padding: 2px 0 9px 3px; background: linear-gradient(#dde8f5, #c9dcf0 100px, #c8dcf2 103px, #d9f4fb 104px, #a6c2e8 107px); }
.grp { border: 1px solid #a3bfdf; border-radius: 3px; background: linear-gradient(#dfe9f5 0 16px, #cfdff0 18px, #d9e7f5); position: relative; display: flex; flex-direction: column; }
.grp footer { height: 19px; margin-top: auto; background: #c1d8f0; color: #3e6aaa; text-align: center; line-height: 19px; display: flex; justify-content: center; }
.lau { position: absolute; right: 5px; bottom: 8px; width: 8px; height: 8px; }
.clip { width: 111px; flex: none; flex-direction: row; gap: 7px; padding: 2px 0 0 10px; }
.clip div { color: #15428b; }
.clip button { display: flex; gap: 4px; align-items: center; height: 21px; min-width: 44px; justify-content: flex-end; }
.font { width: 314px; flex: none; }
.row { display: flex; align-items: center; gap: 4px; height: 22px; margin: 12px 0 0 3px; }
.row + .row { margin-top: 11px; }
.combo { width: 55px; height: 25px; display: flex; align-items: center; border: 1px solid #abc1de; background: #eaf2fb; padding-right: 4px; margin-left: -4px; }
.combo.wide { width: 125px; margin-left: 0; }
.combo input { flex: 1; min-width: 0; border: 0; background: none; font: inherit; padding: 0 2px; }
.bt { display: flex; height: 22px; border: 1px solid #8fadd3; border-radius: 3px; background: linear-gradient(#dae6f4, #c6d8ee 50%, #d4e3f4); }
.bt button { width: 21px; display: flex; align-items: center; justify-content: center; gap: 3px; }
.bt button + button { border-left: 1px solid #b4cae4; }
.bt .w34 { width: 34px; gap: 5px; }
.bt .w30 { width: 29px; }
.al button { width: 23px; }
.hot, .lit { background: linear-gradient(#f9c078, #fdb04e 45%, #ffe08a); }
.ser { font: bold 17px/20px "Liberation Serif", serif; }
.ser button { gap: 1px; }
.ser .sm { font-size: 14px; }
.boxed b { border: 1px solid #333; width: 16px; line-height: 16px; }
.wen button { flex-direction: column; gap: 0; font: bold 11px/11px "Noto Sans CJK SC", sans-serif; color: #2a4fb0; }
.wen small { font: bold 8px/8px "Noto Sans", sans-serif; color: #222; }
.font .circ { margin-left: 284px; border-radius: 3px; }
.para { width: 244px; flex: none; }
.styles { width: 784px; flex: none; }
.gallery { display: flex; gap: 8px; margin: 4px 0 0 4px; padding: 4px 4px 5px; background: #d6e5f5; border: 1px solid #b6cde8; height: 60px; }
.gallery button { width: 64px; height: 50px; background: #fff; flex: none; color: #1a2a6c; overflow: hidden; padding: 0 3px; }
.gallery span { display: block; overflow: hidden; height: 31px; font: 14px/32px "Liberation Serif", serif; color: #000; text-align: left; }
.gallery .h1 span { font: bold 26px/28px "Liberation Serif", serif; }
.gallery .h2 span { font: bold 20px/30px "Liberation Serif", serif; }
.gallery .dim span { font-style: italic; color: #808080; }
.gallery .it span { font-style: italic; }
.gallery .blu span { font-style: italic; font-weight: bold; color: #4f81bd; }
.gallery .bd span { font-weight: bold; }
.desk { flex: 1; min-height: 0; display: flex; flex-direction: column; gap: 18px; padding-right: 62px; overflow: hidden; background: linear-gradient(#a3c0e8, #8fafd9 60px, #567cb3 480px, #587eb5 520px, #6a94d4); }
.page { background: #fff; border: solid #4a5a74; border-width: 1px 1px 0 0; box-shadow: 4px 3px 5px rgba(30, 50, 90, .6); flex: none; height: 800px; white-space: nowrap; font: 16px/38px "Liberation Serif", "Noto Sans CJK SC", serif; }
.page.first { height: 45px; border-width: 0 1px 1px 0; }
.corners { display: flex; justify-content: space-between; margin: 84px 114px 0 421px; }
.corners i { width: 30px; height: 30px; border: solid #aaa; border-width: 0 1px 1px 0; }
.corners i + i { border-width: 0 0 1px 1px; }
.page ol, .page h2, .page > p { margin-left: 452px; list-style: none; }
.page li { display: grid; grid-template-columns: 28px 1fr; }
.page li > span { font-family: "Noto Sans CJK SC", sans-serif; }
.page h2 { font-weight: bold; line-height: 36px; }
.page .big { font-size: 18px; line-height: 37px; color: #222; }
.page .mid { font-size: 17px; line-height: 37px; }
.mid span { font: 15px/20px "Liberation Mono", monospace; }
.page em { font-style: normal; }
.red { color: #d81818; }
.page s { text-decoration: none; color: #777; font: 10px/10px "DejaVu Sans", sans-serif; }
.page table { margin-left: 573px; width: 435px; font-size: 18px; line-height: 34px; }
.k1 { width: 62px; } .k2 { width: 213px; } .k3 { width: 142px; } .k4 { width: 18px; }
.page tr { height: 38px; }
.page td, .page th { border: 1px solid #000; padding: 0 0 0 6px; text-align: center; }
.page th { font-weight: bold; padding-left: 4px; }
.page td:last-child { border: 0; vertical-align: top; line-height: 20px; text-align: left; padding-left: 3px; }
.page td b { font: 18px/20px "Noto Sans CJK SC", sans-serif; }
.wstatus { height: 22px; flex: none; border-top: 1px solid #567; background: linear-gradient(#e6effa, #c9dcf6 40%, #b3cdf2 60%, #d6e6fb); display: flex; justify-content: flex-end; }
.wstatus div { width: 44px; border-left: 1px solid #6f94c8; display: flex; align-items: center; gap: 4px; padding-left: 5px; }
.wstatus button { width: 19px; height: 18px; display: grid; place-items: center; border: 1px solid #c29a50; }

/* EDS window */
.eds { position: absolute; left: 0; width: 1022px; top: 144px; bottom: 40px; display: flex; flex-direction: column; background: #eaf3fd; border: solid #6f84a2; border-width: 1px 1px 0 0; border-radius: 0 8px 0 0; box-shadow: inset -4px 0 #b5c9e5; padding-right: 4px; overflow: hidden; font-family: "Liberation Serif", "Noto Sans CJK SC", serif; }
.etop { height: 57px; flex: none; display: flex; align-items: flex-start; padding: 7px 12px 0 8px; background: linear-gradient(#c3d4eb, #b8c9e1); border-bottom: 1px solid #8898b0; gap: 17px; }
.etop .dn { margin: 12px -3px 0 -3px; }
.etop h1 { margin: -2px 0 0 276px; color: #1e3f7b; font-family: "Noto Sans", "Noto Sans CJK SC", sans-serif; }
.etop svg:nth-child(3) { margin-left: -3px; }
.etop svg:nth-child(7) { margin-left: -3px; }
.ectl { width: 88px; height: 14px; margin: 2px 0 0 auto; }
.eband { height: 27px; flex: none; background: #b9cce6; display: flex; align-items: center; justify-content: flex-end; padding-right: 5px; }
.etools { height: 89px; flex: none; border: solid #8898b0; border-width: 1px 0; border-bottom-color: #5a6b82; background: linear-gradient(#f0f6fd, #dae5f2); display: grid; grid-template-columns: 53px 66px 48px 48px 48px 48px 42px 60px 60px 60px 24px 48px 48px 48px 72px 24px; column-gap: 15px; color: #1e395b; align-items: start; overflow: hidden; }
.etools > button { display: flex; flex-direction: column; align-items: center; padding-top: 3px; gap: 6px; line-height: 16px; margin: 0 -4px; }
.etools .m::after { content: ""; border: 3px solid transparent; border-top: 4px solid #1e395b; border-bottom: 0; margin-top: 14px; }
.etools .dis { color: #8a8f96; }
.sw { display: flex; flex-direction: column; align-items: flex-start; }
.off { display: flex; align-items: center; width: 56px; height: 22px; border: 1px solid #b8c4d4; border-left: 0; border-radius: 0 3px 3px 0; margin: 7px 0 6px; font-weight: bold; font-size: 11px; color: #6d7480; background: #e9f0f8; gap: 7px; }
.off input { position: absolute; opacity: 0; }
.off i { width: 18px; height: 20px; background: linear-gradient(#d2dae4, #b8c3d0); border-right: 1px solid #8a96a8; border-radius: 0 3px 3px 0; }
.sw button { line-height: 17px; margin-left: -3px; }
.cap { display: flex; flex: none; height: 22px; color: #1e3f7b; }
.cap::before, .cap::after { content: ""; border-top: 1px solid #5a6b82; margin-top: 9px; flex: none; }
.cap::after { flex: 1; }
.cap span { border: 1px solid #5a6b82; border-top-color: #8898b0; border-radius: 3px; background: linear-gradient(#e6f0fb, #dbe6f3); line-height: 15px; text-align: center; height: 20px; white-space: nowrap; }
.cap.main { height: 20px; }
.main::before { width: 449px; }
.main span { width: 64px; border-top: 0; }
.jobs { height: 107px; flex: none; display: flex; gap: 2px; background: #8ea4c4; }
.jgrid { width: 943px; background: #fff; display: flex; flex-direction: column; overflow: hidden; }
.jgrid table { width: 958px; flex: none; }
.jgrid th { height: 32px; border-right: 1px solid #8ea4c4; border-top: 1px solid #8ea4c4; border-bottom: 1px solid #8ea4c4; background: linear-gradient(#f4f8fd, #e2ebf6); padding: 0; font-family: "Noto Sans", "Noto Sans CJK SC", sans-serif; white-space: nowrap; }
.jgrid td { height: 22px; background: #aed2f8; border-right: 1px solid #bcd6f4; padding: 0; white-space: nowrap; }
.c16 { width: 16px; } .c112 { width: 112px; } .c35 { width: 35px; } .c64 { width: 64px; } .c70 { width: 70px; } .c44 { width: 44px; } .c40 { width: 40px; } .c120 { width: 120px; } .c63 { width: 63px; } .c58 { width: 58px; } .c88 { width: 88px; }
.hs { margin-top: auto; height: 12px; flex: none; background: #f4f5f6; display: flex; align-items: center; justify-content: space-between; padding-right: 7px; }
.hs i { width: 720px; height: 12px; border: 1px solid #8a919c; border-left: 0; background: repeating-linear-gradient(90deg, #777 0 1px, transparent 1px 2px) 274px 2px / 7px 8px no-repeat, #eceef1; }
.hs b { border: 5px solid transparent; width: 0; }
.hs .r { border-left: 5px solid #4a4a4a; border-right: 0; }
.hs .lft { border-right: 5px solid #4a4a4a; border-left: 0; }
.jside { flex: 1; background: #fff; overflow: hidden; }
.jside div { height: 21px; border: 1px solid #8ea4c4; border-width: 1px 0; background: #e8f0f9; padding-left: 25px; white-space: nowrap; line-height: 20px; }
.split { height: 11px; flex: none; border-top: 1px solid #8898b0; box-shadow: inset 0 2px #dce8f6, inset 0 3px #5a6b82; background: linear-gradient(#f6c660, #ffd880); display: flex; align-items: flex-end; gap: 9px; padding-left: 448px; }
.split b { border: 4px solid transparent; border-top: 0; border-bottom: 4px solid #4a4a4a; margin-bottom: 1px; }
.split i { width: 36px; height: 2px; margin-bottom: 3px; background: repeating-linear-gradient(90deg, #444 0 2px, transparent 2px 4px); }
.lower { flex: 1; min-height: 0; display: flex; }
.flow { width: 498px; display: flex; flex-direction: column; flex: none; }
.proc::before { width: 82px; }
.proc span { width: 151px; }
.frow { flex: 1; min-height: 0; display: flex; }
.note { width: 34px; background: linear-gradient(#fff 318px, #d0e2fa 318px); border: solid #5f86bd; border-width: 1px 1px 0 0; padding-top: 6px; }
.note div { height: 36px; background: #f0f1f1; border-bottom: 1px solid #9aa8bc; padding: 8px 0 0 2px; }
.vs { width: 7px; flex: none; background: linear-gradient(90deg, #dce8f6, #6a7d96); border-left: 1px solid #35639e; display: flex; flex-direction: column; align-items: center; padding-top: 250px; gap: 8px; }
.vs b { border: 4px solid transparent; border-left: 0; border-right: 4px solid #1e395b; }
.vs i { width: 2px; height: 36px; background: repeating-linear-gradient(#223a60 0 2px, #eef 2px 4px); }
.vs.wide { width: 10px; padding-top: 264px; border-right: 1px solid #2c5a9c; }
.vs.mid { width: 9px; padding-top: 250px; border-right: 2px solid #4a78b8; }
.tree { flex: 1; background: #fff; display: flex; flex-direction: column; min-width: 0; }
.tgrid { flex: 1; min-height: 0; overflow: hidden; display: flex; }
.tree table { width: 439px; flex: none; height: max-content; }
.t1 { width: 154px; } .t2 { width: 55px; } .t3 { width: 75px; }
.tree th { height: 17px; padding: 0 0 0 7px; text-align: left; line-height: 15px; background: linear-gradient(#f2f7fd, #dde8f5); border: 1px solid #a6bedd; border-left: 0; white-space: nowrap; }
.tree th:first-child { padding-left: 1px; }
.tree th:nth-child(2) { padding-left: 3px; }
.tree td { height: 19px; padding: 0 6px; line-height: 18px; border-right: 1px solid #dde3ea; white-space: nowrap; overflow: hidden; }
.tree td:first-child { padding-left: 59px; background: url("data:image/svg+xml,%3Csvg xmlns='http://www.w3.org/2000/svg' width='60' height='19'%3E%3Cpath stroke='%23333' stroke-dasharray='1 1' d='M24.500 0v19M30 10.500h4'/%3E%3Cpath fill='%23fff' stroke='%23888' d='M20.500 6.500h8v8h-8z'/%3E%3Cpath stroke='%23000' d='M22 10.500h5'/%3E%3Cpath fill='%23dba633' stroke='%23b07818' d='M37.500 3.500h6l1 2h7v9h-14z'/%3E%3Cpath fill='%23ffd02e' stroke='%23e09a10' d='M40.500 7.500h12v8h-12z'/%3E%3C/svg%3E") no-repeat; }
.tree .l td:first-child { padding-left: 74px; background: url("data:image/svg+xml,%3Csvg xmlns='http://www.w3.org/2000/svg' width='72' height='19'%3E%3Cpath stroke='%23333' stroke-dasharray='1 1' d='M24.500 0v19M40.500 0v19M41 10.500h9'/%3E%3Cpath fill='%23e8f3ff' stroke='%236fa0e0' d='M54.500 2.500h9l4 4v11h-13z'/%3E%3Cpath fill='%233f7fe0' d='M63 2l5 5h-5z'/%3E%3C/svg%3E") no-repeat; }
.tree .e td:first-child { background-image: url("data:image/svg+xml,%3Csvg xmlns='http://www.w3.org/2000/svg' width='72' height='19'%3E%3Cpath stroke='%23333' stroke-dasharray='1 1' d='M24.500 0v19M40.500 0v10M41 10.500h9'/%3E%3Cpath fill='%23e8f3ff' stroke='%236fa0e0' d='M54.500 2.500h9l4 4v11h-13z'/%3E%3Cpath fill='%233f7fe0' d='M63 2l5 5h-5z'/%3E%3C/svg%3E"); }
.tree .sel td { height: 17px; line-height: 14px; padding-bottom: 2px; background: linear-gradient(#fff3c0, #fbd54e 40%, #fbd54e 65%, #fff0a8); border-color: transparent; }
.tree .sel td:first-child { background: url("data:image/svg+xml,%3Csvg xmlns='http://www.w3.org/2000/svg' width='72' height='19'%3E%3Cpath stroke='%23333' stroke-dasharray='1 1' d='M24.500 0v19M40.500 0v8M41 8.500h9'/%3E%3Cpath fill='%23e8f3ff' stroke='%236fa0e0' d='M54.500-1h9l4 4v12h-13z'/%3E%3Cpath fill='%233f7fe0' d='M63-1l5 5h-5z'/%3E%3C/svg%3E") no-repeat, linear-gradient(#fff3c0, #fbd54e 40%, #fbd54e 65%, #fff0a8) 52px 0 no-repeat; }
.vbar { flex: 1; background: #f7f7f7; display: flex; flex-direction: column; align-items: center; padding: 7px 2px 6px; }
.vbar i { width: 14px; height: 121px; margin: 179px 0 auto; border: 1px solid #8a919c; border-radius: 2px; background: repeating-linear-gradient(#777 0 1px, transparent 1px 2px) 2px 56px / 9px 7px no-repeat, #eceef1; }
.vbar b { border: 5px solid transparent; }
.vbar .u { border-top: 0; border-bottom-color: #444; }
.vbar .d { border-bottom: 0; border-top-color: #444; }
.tree-hs { padding: 0 24px 0 2px; justify-content: flex-start; }
.tree-hs i { width: 246px; margin: 0 auto 0 7px; border: 1px solid #8a919c; background-position: 118px 3px; }
.detail { flex: 1; min-width: 0; display: flex; flex-direction: column; }
.dtabs { height: 25px; flex: none; display: flex; background: linear-gradient(#c2d6ef, #e2edf9); border-bottom: 1px solid #b4c8e2; gap: 14px; }
.dtabs button { padding-bottom: 2px; }
.dtabs .on { width: 68px; background: radial-gradient(#3c7cd0, #1b4fa4); color: #fff; font: bold 13px/20px "Noto Sans CJK SC", sans-serif; margin-right: -7px; padding: 0 4px 0 0; display: flex; flex-direction: column; align-items: center; }
.dtabs .on::after { content: ""; border: 5px solid transparent; border-top: 0; border-bottom-color: #fff; margin-top: auto; }
.drow { flex: 1; min-height: 0; display: flex; }
.params { width: 375px; flex: none; background: #fff; display: flex; flex-direction: column; overflow: hidden; border: solid #3a6ab0; border-width: 0 2px 0 1px; }
.sub { height: 28px; flex: none; background: linear-gradient(#d4e4fa, #fff 22px, #3a6ab0 22px 23px, #8fb2e6 23px); padding: 2px 0 0 4px; }
.sub button { width: 96px; height: 21px; padding-left: 18px; font: bold 13px/18px "Noto Sans CJK SC", sans-serif; background: url("data:image/svg+xml,%3Csvg xmlns='http://www.w3.org/2000/svg' width='96' height='21'%3E%3ClinearGradient id='a' x2='0' y2='1'%3E%3Cstop stop-color='%23f4f9ff'/%3E%3Cstop offset='1' stop-color='%239abcec'/%3E%3C/linearGradient%3E%3Cpath fill='url(%23a)' stroke='%233a5f98' d='M0 20.500 18 3q2-2.500 6-2.500h68q2 0 2 2v19'/%3E%3C/svg%3E") no-repeat; }
.params table { width: 392px; flex: none; }
.p0 { width: 34px; } .p1 { width: 118px; } .p2 { width: 120px; } .p3 { width: 60px; }
.params th { height: 33px; border: 1px solid #9fb5d4; border-left: 0; background: linear-gradient(#f4f8fd, #e2ebf6); font-family: "Noto Sans CJK SC", sans-serif; padding: 0; }
.params .all { background: linear-gradient(135deg, transparent 50%, #3a7ad8 50%) 21px 19px / 10px 10px no-repeat, #e8f0fa; }
.params td { height: 22px; padding: 0 0 0 1px; border: 1px solid #c3d3ea; border-left: 0; white-space: nowrap; line-height: 18px; }
.params tbody tr:nth-child(even) td { background: #f3f3f3; }
.params tbody tr:nth-child(odd) td:nth-child(even) { background: #e8f1fb; }
.params tbody tr td:first-child, .params tbody tr:nth-child(even) td:first-child { background: linear-gradient(90deg, #dde8f6, #cfdff0); border-color: #9fb5d4; padding-left: 2px; }
.params tbody .cur:nth-child(odd) td:nth-child(2) { background: #aed2f8; }
.params .k td:nth-child(2) { color: #b41c84; }
.params td:nth-child(4) { padding-left: 3px; }
.par-hs { height: 7px; overflow: hidden; align-items: flex-start; padding: 0 8px; justify-content: flex-start; }
.par-hs i { width: 314px; margin: 0 auto 0 5px; border: 1px solid #8a919c; background-position: 152px 2px; }
.memo { flex: 1; min-width: 0; background: #f0f0f0; white-space: nowrap; overflow: hidden; }
.memo h3 { height: 26px; background: linear-gradient(#f4f8fd, #dfe9f5); border-bottom: 1px solid #7a8798; padding-left: 2px; line-height: 26px; color: #1e3f7b; }
.memo p { padding: 3px 0 0 2px; line-height: 12px; }

.ink { position: absolute; left: 0; top: 0; width: 100%; height: 100%; pointer-events: none; }
.ime { position: absolute; right: 256px; bottom: 92px; height: 26px; width: 169px; background: #fff; border: 1px solid #b0c4dc; border-radius: 2px; display: flex; align-items: center; gap: 8px; }
.ime svg { width: 16px; height: 16px; }
.ime svg:first-child { width: 32px; height: 32px; margin: 0 -3px 4px -9px; }
.ime span { font: bold 16px/20px "Noto Sans CJK SC", sans-serif; color: #0b6fd0; }

.taskbar { position: absolute; left: 0; right: 0; bottom: 0; height: 40px; display: flex; gap: 9px; align-items: stretch; background: linear-gradient(90deg, #3b3e42 0 1180px, #3a4146 1300px, #1d2b31 1560px); color: #fff; padding-left: 16px; }
.taskbar button { display: flex; align-items: center; flex: none; }
.start { width: 38px; }
.exp { width: 30px; }
.taskbar .t { width: 129px; gap: 4px; padding: 2px 0 0 5px; border-bottom: 2px solid #76b4ea; }
.taskbar .on { background: #64686c; width: 137px; margin: 0 -4px; padding-left: 9px; }
.tray { margin-left: auto; display: flex; align-items: center; gap: 8px; padding-right: 15px; }
.sg { width: 18px; height: 18px; margin: 0 -3px 0 3px; }
.zh { width: 16px; font-size: 14px; }
.tray time { text-align: center; line-height: 19px; width: 80px; }
```
